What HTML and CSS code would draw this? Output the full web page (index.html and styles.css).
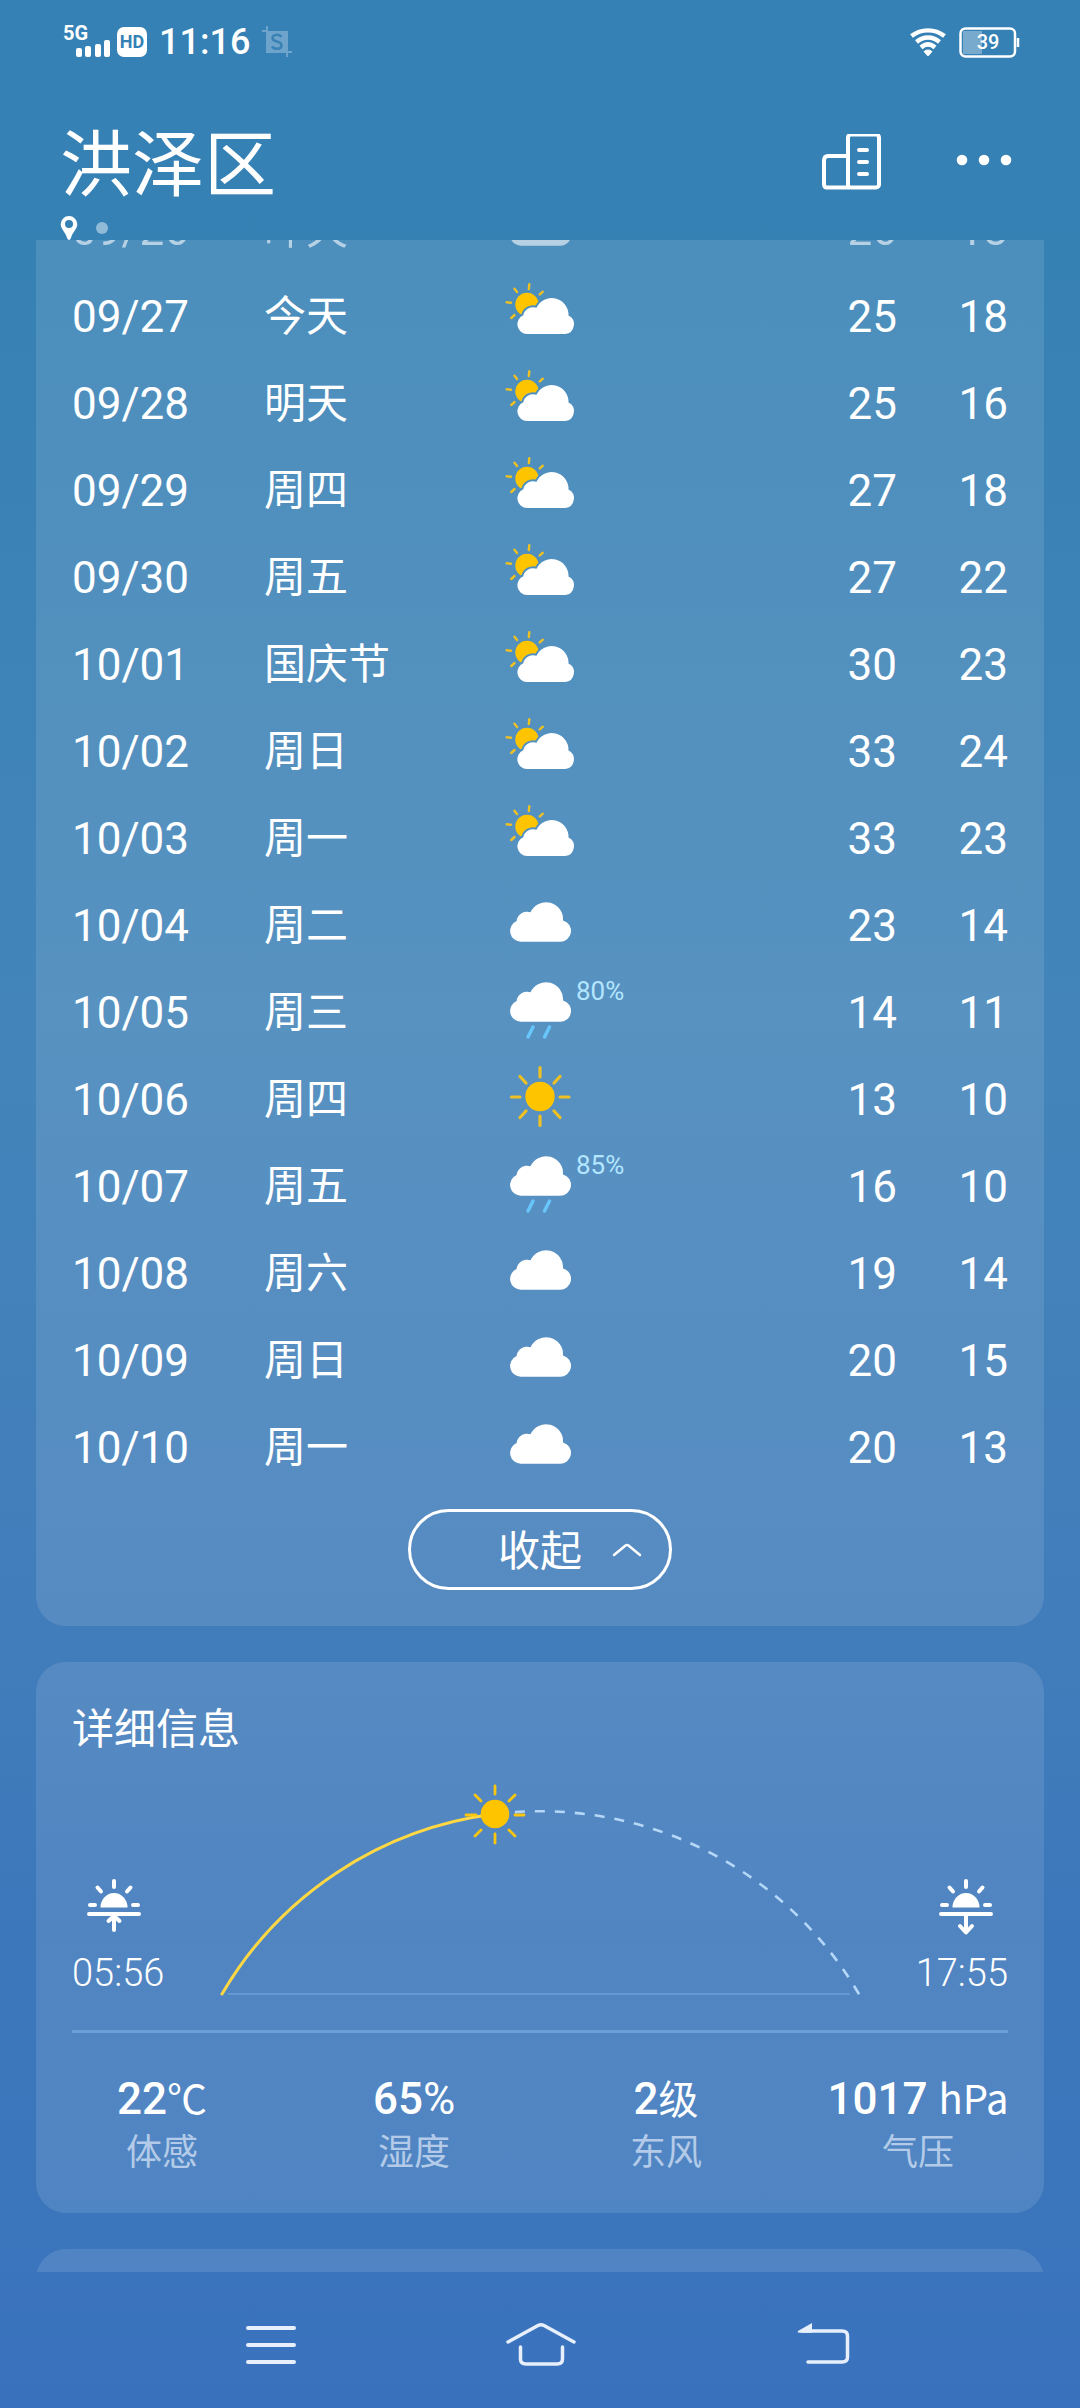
FILE: index.html
```html
<!DOCTYPE html>
<html lang="zh-CN">
<head>
<meta charset="utf-8">
<meta name="viewport" content="width=device-width, initial-scale=1">
<title>洪泽区天气</title>
<link rel="stylesheet" href="styles.css">
</head>
<body>
<svg class="sprite" aria-hidden="true">
  <defs>
    <symbol id="cloud" viewBox="24 0 72 87">
      <path fill="#fff" d="M41 59.7A10.8 10.8 0 0 1 36.6 39A10.5 10.5 0 0 1 50.500 30.300A17 17 0 0 1 83 38.500A10.8 10.8 0 0 1 79.3 59.7Z"/>
    </symbol>
    <symbol id="rain" viewBox="24 0 72 87">
      <path fill="#fff" transform="translate(0 -7)" d="M41 59.7A10.8 10.8 0 0 1 36.6 39A10.5 10.5 0 0 1 50.500 30.300A17 17 0 0 1 83 38.500A10.8 10.8 0 0 1 79.3 59.7Z"/>
      <path stroke="#68c6fa" stroke-width="3.5" stroke-linecap="round" d="M53 58L48 68M69.500 58L64.500 68"/>
    </symbol>
    <symbol id="sun" viewBox="24 0 72 87">
      <circle cx="60" cy="40.500" r="14.700" fill="#fec400"/>
      <path stroke="#eec022" stroke-width="3.200" stroke-linecap="round" d="M60 11.500V21M60 60V69.500M31.500 41H40M80 41H89M40 20.500L46 27M80 20.500L74 27M40 61.500L46 55M80 61.500L74 55"/>
    </symbol>
    <mask id="behind-cloud">
      <rect x="24" width="72" height="87" fill="#fff"/>
      <path fill="#000" stroke="#000" stroke-width="4" d="M47 61A9.800 9.800 0 0 1 43.300 42.200A10 10 0 0 1 56.500 34.800A16.800 16.800 0 0 1 88.500 42.500A9.800 9.800 0 0 1 85.300 61Z"/>
    </mask>
    <symbol id="partly" viewBox="24 0 72 87">
      <circle cx="47" cy="31.500" r="11.700" fill="#fec400" mask="url(#behind-cloud)"/>
      <path stroke="#eec022" stroke-width="2.400" stroke-linecap="round" d="M49.300 11.300L48.800 16M62.800 18.700L59.800 21.400M34.500 15.800L37 19M26.700 29.300L31 29.700M34.500 42L31.300 45"/>
      <path fill="#fff" d="M47 61A9.800 9.800 0 0 1 43.300 42.200A10 10 0 0 1 56.500 34.800A16.800 16.800 0 0 1 88.500 42.500A9.800 9.800 0 0 1 85.300 61Z"/>
    </symbol>
    <symbol id="half-sun" viewBox="0 0 84 60">
      <path fill="#fff" d="M28.500 31.500A13.500 14.500 0 0 1 55.500 31.500Z"/>
      <path stroke="#fff" stroke-width="4" stroke-linecap="round" d="M42 5V11M25.500 11.500L29 15.500M58.500 11.500L55 15.500M18 29H23M61 29H66M17 38H67"/>
    </symbol>
  </defs>
</svg>

<header class="top">
  <div class="status">
    <svg class="signal" width="50" height="34" viewBox="0 0 50 34" role="img" aria-label="信号">
      <text class="signal-text" x="0" y="15">5G</text>
      <g fill="#fff"><rect x="13" y="23" width="6" height="9" rx="2"/><rect x="22" y="21" width="6" height="11" rx="2"/><rect x="32" y="19" width="6" height="13" rx="2"/><rect x="41" y="15" width="6" height="17" rx="2"/></g>
    </svg>
    <span class="hd">HD</span>
    <time class="clock">11:16</time>
    <svg class="crop" width="30" height="32" viewBox="0 0 30 32" role="img" aria-label="截屏">
      <rect x="4" y="5" width="22" height="22" fill="#6ea4cb"/>
      <path stroke="#6ea4cb" stroke-width="2" d="M5 0V6M0 5H6M25 26V31M24 26H30"/>
      <path fill="none" stroke="#3a82b5" stroke-width="2.500" d="M19.500 11C17.500 8 10.500 8 10.500 12C10.500 17 19.500 14 19.500 19.500C19.500 24 12 23.500 10 20.500"/>
    </svg>
    <svg class="wifi" width="38" height="32" viewBox="0 0 38 32" role="img" aria-label="无线网络">
      <g fill="none" stroke="#fff" stroke-width="4.400"><path d="M2.500 10C12 2.500 26 2.500 35.500 10"/><path d="M7.500 16C14.500 10 23.500 10 30.500 16"/><path d="M12 21.500C16.500 17.500 21.500 17.500 26 21.500"/></g>
      <path fill="#fff" d="M14.500 25.500Q19 21.500 23.500 25.500L20 29.500Q19 30.500 18 29.500Z"/>
    </svg>
    <svg class="battery" width="61" height="32" viewBox="0 0 61 32" role="img" aria-label="电量 39%">
      <rect x="4" y="5" width="19" height="23" fill="#78aace"/>
      <rect x="1.500" y="2.500" width="54.500" height="28" rx="5" fill="none" stroke="#fff" stroke-width="2.500"/>
      <path stroke="#fff" stroke-width="2.500" d="M59 12V21"/>
      <text class="battery-text" x="29" y="23" text-anchor="middle">39</text>
    </svg>
  </div>
  <div class="titlebar">
    <h1 class="city">洪泽区</h1>
    <button class="icon-button" type="button" aria-label="城市管理">
      <svg width="64" height="64" viewBox="0 4 64 64" fill="none" stroke="#fff" stroke-width="4">
        <rect x="28" y="4.500" width="31" height="53" rx="3"/>
        <path d="M28 26H8Q4 26 4 31V54Q4 57.500 7 57.500H30"/>
        <path stroke-linecap="round" d="M39 20H47M39 32H47M39 44H47"/>
      </svg>
    </button>
    <button class="icon-button" type="button" aria-label="更多">
      <svg width="64" height="64" viewBox="0 4 64 64" fill="#fff"><circle cx="10" cy="30" r="5.300"/><circle cx="32" cy="30" r="5.300"/><circle cx="54" cy="30" r="5.300"/></svg>
    </button>
  </div>
  <div class="pages">
    <svg width="18" height="24" viewBox="0 0 18 24"><path fill="#fff" fill-rule="evenodd" d="M9 0A8.300 8.300 0 0 0 .7 8.300C.7 13 6 17 7 22Q9 26 11 22C12 17 17.300 13 17.300 8.300A8.300 8.300 0 0 0 9 0ZM9 4A4 4 0 1 1 9 12A4 4 0 1 1 9 4Z"/></svg>
    <span class="page-dot"></span>
  </div>
</header>

<main class="content">
  <section class="card forecast" aria-label="15日天气预报">
    <table class="days">
      <colgroup><col class="c-date"><col class="c-day"><col class="c-icon"><col><col class="c-low"></colgroup>
      <tbody>
        <tr class="past"><td>09/26</td><td>昨天</td><td><div class="weather"><svg class="wi"><use href="#cloud"/></svg></div></td><td>26</td><td>18</td></tr>
        <tr><td>09/27</td><td>今天</td><td><div class="weather"><svg class="wi"><use href="#partly"/></svg></div></td><td>25</td><td>18</td></tr>
        <tr><td>09/28</td><td>明天</td><td><div class="weather"><svg class="wi"><use href="#partly"/></svg></div></td><td>25</td><td>16</td></tr>
        <tr><td>09/29</td><td>周四</td><td><div class="weather"><svg class="wi"><use href="#partly"/></svg></div></td><td>27</td><td>18</td></tr>
        <tr><td>09/30</td><td>周五</td><td><div class="weather"><svg class="wi"><use href="#partly"/></svg></div></td><td>27</td><td>22</td></tr>
        <tr><td>10/01</td><td>国庆节</td><td><div class="weather"><svg class="wi"><use href="#partly"/></svg></div></td><td>30</td><td>23</td></tr>
        <tr><td>10/02</td><td>周日</td><td><div class="weather"><svg class="wi"><use href="#partly"/></svg></div></td><td>33</td><td>24</td></tr>
        <tr><td>10/03</td><td>周一</td><td><div class="weather"><svg class="wi"><use href="#partly"/></svg></div></td><td>33</td><td>23</td></tr>
        <tr><td>10/04</td><td>周二</td><td><div class="weather"><svg class="wi"><use href="#cloud"/></svg></div></td><td>23</td><td>14</td></tr>
        <tr><td>10/05</td><td>周三</td><td><div class="weather"><svg class="wi"><use href="#rain"/></svg><span class="chance">80%</span></div></td><td>14</td><td>11</td></tr>
        <tr><td>10/06</td><td>周四</td><td><div class="weather"><svg class="wi"><use href="#sun"/></svg></div></td><td>13</td><td>10</td></tr>
        <tr><td>10/07</td><td>周五</td><td><div class="weather"><svg class="wi"><use href="#rain"/></svg><span class="chance">85%</span></div></td><td>16</td><td>10</td></tr>
        <tr><td>10/08</td><td>周六</td><td><div class="weather"><svg class="wi"><use href="#cloud"/></svg></div></td><td>19</td><td>14</td></tr>
        <tr><td>10/09</td><td>周日</td><td><div class="weather"><svg class="wi"><use href="#cloud"/></svg></div></td><td>20</td><td>15</td></tr>
        <tr><td>10/10</td><td>周一</td><td><div class="weather"><svg class="wi"><use href="#cloud"/></svg></div></td><td>20</td><td>13</td></tr>
      </tbody>
    </table>
    <button class="collapse" type="button">
      <span class="collapse-text">收起</span>
      <svg class="chevron" width="30" height="18" viewBox="0 0 30 18" fill="none" stroke="#fff" stroke-width="2.500" stroke-linecap="round"><path d="M2 14L13.500 4.500Q15 3.500 16.500 4.500L28 14"/></svg>
    </button>
  </section>

  <section class="card detail">
    <h2 class="detail-title">详细信息</h2>
    <div class="sunpath">
      <div class="sun-event">
        <svg width="84" height="60" viewBox="0 0 84 60" role="img" aria-label="日出"><use href="#half-sun"/><path fill="none" stroke="#fff" stroke-width="4" stroke-linecap="round" stroke-linejoin="round" d="M42 40V54M36.500 45L42 40L47.500 45"/></svg>
        <time>05:56</time>
      </div>
      <svg class="arc" viewBox="0 0 660 224" fill="none" role="img" aria-label="太阳轨迹">
        <path stroke="#6599d3" stroke-width="2" d="M18 218H640"/>
        <path stroke="#b5d7f8" stroke-width="2.600" stroke-dasharray="10 10" d="M285 38A369.500 369.500 0 0 1 649.500 219"/>
        <path stroke="#ffd843" stroke-width="3" stroke-linecap="round" d="M12 218A369.500 369.500 0 0 1 285 38"/>
        <circle cx="285" cy="38" r="14.300" fill="#fec400"/>
        <path stroke="#fbc60d" stroke-width="2.800" stroke-linecap="round" d="M285 10V18M285 58V67M256 39H266M305 39H314M265 19L271 25M305 19L299 25M265 60L271 54M305 60L299 54"/>
      </svg>
      <div class="sun-event sunset">
        <svg width="84" height="60" viewBox="0 0 84 60" role="img" aria-label="日落"><use href="#half-sun"/><path fill="none" stroke="#fff" stroke-width="4" stroke-linecap="round" stroke-linejoin="round" d="M42 38V56M36 50L42 56.500L48 50"/></svg>
        <time>17:55</time>
      </div>
    </div>
    <dl class="stats">
      <div class="stat"><dd>22<span class="unit">℃</span></dd><dt>体感</dt></div>
      <div class="stat"><dd>65<span class="percent">%</span></dd><dt>湿度</dt></div>
      <div class="stat"><dd>2<span class="unit">级</span></dd><dt>东风</dt></div>
      <div class="stat"><dd>1017 <span class="unit">hPa</span></dd><dt>气压</dt></div>
    </dl>
  </section>

  <section class="card next"></section>
</main>

<nav class="system-nav" aria-label="系统导航">
  <button class="nav-button" type="button" aria-label="最近任务">
    <svg width="100" height="60" viewBox="0 0 100 60" stroke="#e6effb" stroke-width="4" stroke-linecap="round"><path d="M28 18H74M28 35H74M28 52H74"/></svg>
  </button>
  <button class="nav-button" type="button" aria-label="主屏幕">
    <svg width="100" height="60" viewBox="0 0 100 60" fill="none" stroke="#e6effb" stroke-width="3.500" stroke-linecap="round"><path d="M18 32L48 15.500Q51 14 54 15.500L84 32M30.500 37V49Q30.500 54 36 54H67Q72.500 54 72.500 49V37"/></svg>
  </button>
  <button class="nav-button" type="button" aria-label="返回">
    <svg width="100" height="60" viewBox="0 0 100 60" fill="none" stroke="#e6effb" stroke-width="3.500" stroke-linecap="round"><path d="M42 21H82Q87.500 21 87.500 26V47Q87.500 52 82 52H48"/><path fill="#e6effb" stroke="none" d="M38 21L52 13V22.700H39Q37 22.700 38 21Z"/></svg>
  </button>
</nav>
</body>
</html>
```

FILE: styles.css
```css
* {
  box-sizing: border-box;
}

body {
  margin: 0;
  height: 100vh;
  display: flex;
  flex-direction: column;
  color: #fff;
  font-family: Roboto, "Noto Sans CJK SC", sans-serif;
  font-size: 42px;
  background: linear-gradient(#3581b5 0%, #3681b4 10%, #4385ba 42%, #427dbb 67%, #3c77bb 80%, #3b76bc 92%, #3a71be 100%);
}

button {
  padding: 0;
  border: 0;
  background: none;
  color: inherit;
  font: inherit;
}

svg {
  display: block;
  flex: none;
}

.sprite {
  position: absolute;
  width: 0;
  height: 0;
}

/* Status bar and title */
.top {
  flex: none;
}

.status {
  display: flex;
  align-items: center;
  height: 84px;
  padding: 0 60px 0 63px;
}

.signal {
  overflow: visible;
}

.signal-text {
  fill: #fff;
  font-size: 20px;
  font-weight: 700;
}

.hd {
  width: 30px;
  margin: 0 12px 0 4px;
  border-radius: 7px;
  background: #fff;
  color: #3581b5;
  font-size: 18px;
  font-weight: 700;
  line-height: 30px;
  text-align: center;
}

.clock {
  font-size: 36px;
  font-weight: 500;
}

.crop {
  margin-left: 12px;
}

.wifi {
  margin-left: auto;
}

.battery {
  margin-left: 12px;
}

.battery-text {
  fill: #fff;
  font-size: 20px;
  font-weight: 500;
}

.titlebar {
  display: flex;
  align-items: center;
  gap: 68px;
  height: 132px;
  padding: 32px 64px 0 60px;
}

.city {
  margin: 0 auto 0 0;
  font-size: 72px;
  font-weight: 400;
  line-height: 100px;
}

.pages {
  display: flex;
  align-items: center;
  gap: 18px;
  height: 24px;
  padding-left: 60px;
}

.page-dot {
  width: 12px;
  height: 12px;
  border-radius: 50%;
  background: #8fbad8;
}

/* Scrolled content */
.content {
  flex: 1;
  min-height: 0;
  overflow: hidden;
  display: flex;
  flex-direction: column;
  gap: 36px;
  padding: 0 36px;
}

.card {
  flex: none;
  border-radius: 30px;
  background: rgba(255, 255, 255, 0.11);
}

.forecast {
  margin-top: -54px;
  padding: 0 36px 36px;
}

.days {
  width: 100%;
  table-layout: fixed;
  border-collapse: collapse;
}

.c-date,
.c-day {
  width: 192px;
}

.c-icon {
  width: 176px;
}

.c-low {
  width: 111px;
}

.days td {
  height: 87px;
  padding: 0;
  font-size: 44px;
  line-height: 60px;
  white-space: nowrap;
}

.days td:nth-child(2) {
  font-size: 42px;
}

.days td:nth-child(n + 4) {
  text-align: right;
}

.past {
  opacity: 0.6;
}

.weather {
  display: flex;
  height: 87px;
  padding-left: 48px;
}

.wi {
  width: 72px;
  height: 87px;
}

.chance {
  margin-top: 6px;
  color: #b4e6ff;
  font-size: 26px;
  line-height: 32px;
}

.collapse {
  display: grid;
  grid-template-columns: 1fr auto 1fr;
  align-items: center;
  width: 264px;
  height: 81px;
  margin: 18px auto 0;
  border: 3px solid #fff;
  border-radius: 41px;
}

.collapse-text {
  grid-column: 2;
  padding-top: 4px;
  line-height: 60px;
}

.chevron {
  margin-left: 30px;
}

/* Sun path and readings */
.detail {
  padding: 38px 36px 36px;
}

.detail-title {
  margin: 0;
  font-size: 42px;
  font-weight: 400;
  line-height: 60px;
}

.sunpath {
  display: grid;
  grid-template-columns: 96px 1fr 96px;
  column-gap: 42px;
  align-items: end;
  margin-top: 16px;
  padding-bottom: 30px;
  border-bottom: 3px solid #6b9fd8;
}

.arc {
  width: 100%;
}

.sun-event {
  display: flex;
  flex-direction: column;
  gap: 12px;
  padding-bottom: 2px;
  font-size: 38px;
  font-weight: 300;
  line-height: 50px;
}

.sunset {
  align-items: flex-end;
}

.stats {
  display: grid;
  grid-template-columns: repeat(4, 1fr);
  margin: 36px -36px 0;
  text-align: center;
}

.stat {
  display: flex;
  flex-direction: column;
}

.stat dd {
  margin: 0;
  font-size: 44px;
  font-weight: 500;
  line-height: 60px;
  white-space: nowrap;
}

.stat dt {
  color: #b3cbe8;
  font-size: 36px;
  line-height: 48px;
}

.unit {
  font-family: "Noto Sans CJK SC", sans-serif;
  font-size: 40px;
  font-weight: 400;
  line-height: 1;
}

.percent {
  font-weight: 400;
}

.next {
  height: 400px;
}

/* System navigation */
.system-nav {
  flex: none;
  display: grid;
  grid-template-columns: repeat(3, 1fr);
  align-items: center;
  justify-items: center;
  height: 136px;
  padding: 0 12.5%;
}
```
